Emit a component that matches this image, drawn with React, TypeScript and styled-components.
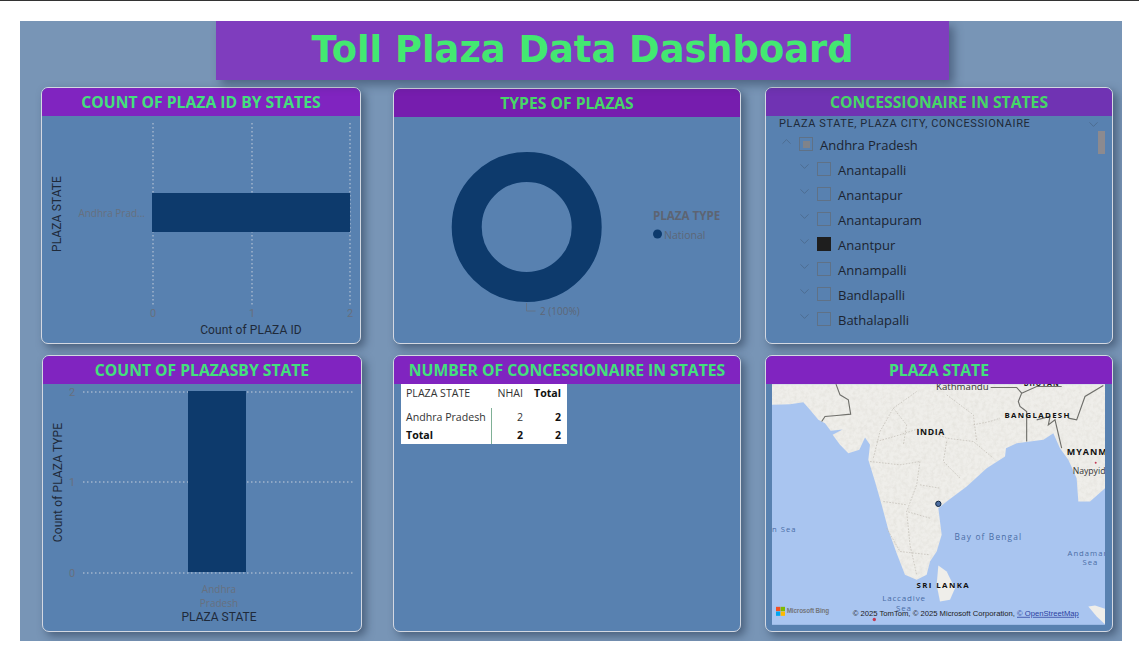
import { createGlobalStyle, styled } from 'styled-components';
import { ChevronDown, ChevronUp } from 'lucide-react';

const GlobalStyle = createGlobalStyle`
  html, body {
    margin: 0;
    padding: 0;
    background: #fff;
  }
  body {
    border-top: 1px solid #333;
    font-family: "Open Sans", "Noto Sans", sans-serif;
  }
`;

const Canvas = styled.main`
  width: 1102px;
  height: 620px;
  margin: 20px 0 0 20px;
  background: #7895b6;
  overflow: hidden;
`;

const TitleBar = styled.h1`
  position: relative;
  z-index: 2;
  width: 733px;
  height: 59px;
  margin: 0 0 7px 196px;
  background: #7f3dbe;
  color: #43e871;
  font: bold 36.8px/58px "DejaVu Sans", sans-serif;
  text-align: center;
  box-shadow: 5px 5px 9px rgba(30, 45, 70, 0.45);
`;

const Board = styled.div`
  display: grid;
  grid-template-columns: 321px 379px 372px;
  grid-template-rows: 257px 277px;
  row-gap: 11px;
  margin-left: 21px;
`;

const Card = styled.section<{ $left?: number; $right?: number; $top?: number }>`
  display: flex;
  flex-direction: column;
  box-sizing: border-box;
  min-width: 0;
  margin: ${(p) => p.$top ?? 0}px ${(p) => p.$right ?? 0}px 0 ${(p) => p.$left ?? 0}px;
  background: #5881b0;
  border: 1px solid #d3d8e2;
  border-radius: 7px;
  box-shadow: 4px 4px 9px rgba(30, 45, 70, 0.5);
  overflow: hidden;
`;

const CardHeader = styled.h2<{ $bg?: string; $fg?: string }>`
  flex: none;
  height: 28px;
  margin: 0;
  background: ${(p) => p.$bg ?? '#8024c0'};
  color: ${(p) => p.$fg ?? '#43e07c'};
  font: bold 15.7px/28px "Open Sans", sans-serif;
  text-align: center;
  white-space: nowrap;
`;

const ChartSvg = styled.svg`
  display: block;
  flex: 1;
  width: 100%;
  min-height: 0;
`;

const TableWrap = styled.div`
  padding: 0 7px;
`;

const MatrixTable = styled.table`
  width: 165px;
  border-collapse: collapse;
  background: #fff;
  color: #333;
  font-size: 10.6px;
  line-height: 15px;
  table-layout: fixed;
  tbody tr:first-child td { height: 19px; }
  tbody tr:last-child td { height: 17px; }
`;

const Th = styled.th<{ $strong?: boolean; $w: number; $right?: boolean }>`
  width: ${(p) => p.$w}px;
  height: 24px;
  padding: 0 ${(p) => (p.$right ? 5 : 0)}px 6px 5px;
  box-sizing: border-box;
  font-weight: ${(p) => (p.$strong ? 700 : 400)};
  color: ${(p) => (p.$strong ? '#111' : '#333')};
  text-align: ${(p) => (p.$right ? 'right' : 'left')};
`;

const Td = styled.td<{ $strong?: boolean; $divider?: boolean; $right?: boolean }>`
  padding: 0 5px;
  font-weight: ${(p) => (p.$strong ? 700 : 400)};
  color: ${(p) => (p.$strong ? '#111' : '#333')};
  text-align: ${(p) => (p.$right ? 'right' : 'left')};
  border-right: ${(p) => (p.$divider ? '1px solid #7fb096' : 'none')};
  white-space: nowrap;
`;

const Slicer = styled.div`
  position: relative;
  flex: 1;
  padding: 0 7px 0 13px;
  color: #1c2431;
`;

const SlicerHead = styled.div`
  display: flex;
  align-items: center;
  justify-content: space-between;
  height: 16px;
  padding-right: 4px;
  font: 11px/16px "Roboto", sans-serif;
  letter-spacing: 0.6px;
  color: #202a38;
  svg { color: #46617f; }
`;

const TreeList = styled.ul`
  margin: 0;
  padding: 0;
  list-style: none;
`;

const TreeRow = styled.li<{ $level: number }>`
  display: flex;
  align-items: center;
  height: 25px;
  padding-left: ${(p) => p.$level * 18}px;
  font-size: 13px;
  svg { flex: none; margin-top: -6px; color: #46617f; }
`;

const Check = styled.span<{ $state?: 'on' | 'part' }>`
  display: flex;
  align-items: center;
  justify-content: center;
  flex: none;
  box-sizing: border-box;
  width: 14px;
  height: 14px;
  margin: -1px 7px 0 5px;
  background: ${(p) => (p.$state === 'on' ? '#1e1e1e' : 'transparent')};
  border: 1px solid ${(p) => (p.$state === 'on' ? '#1e1e1e' : '#5f7186')};
  &::after {
    content: '';
    display: ${(p) => (p.$state === 'part' ? 'block' : 'none')};
    width: 7px;
    height: 7px;
    background: #80838a;
  }
`;

const ScrollThumb = styled.span`
  position: absolute;
  top: 15px;
  right: 7px;
  width: 7px;
  height: 23px;
  background: #8c8a8f;
`;

const MapFrame = styled.div`
  flex: 1;
  padding: 0 6px 6px;
  min-height: 0;
`;

const MapSvg = styled.svg`
  display: block;
  width: 333px;
  height: 241px;
`;

const cities = ['Anantapalli', 'Anantapur', 'Anantapuram', 'Anantpur', 'Annampalli', 'Bandlapalli', 'Bathalapalli'];

const mainland =
  'M36 180L90 178L130 172L150 195L175 225L195 235L212 258L248 254L218 270L240 300L265 325L298 315L315 278L330 300L325 345L345 410L365 480L385 555L410 625L435 690L470 705L500 690L510 650L530 620L545 570L535 490L560 470L620 425L680 370L735 335L738 310L770 295L850 285L880 265L900 310L925 345L950 400L955 470L990 470L1035 430V118H36Z';

function GridLine(props: { x1: number; y1: number; x2: number; y2: number }) {
  return <line {...props} stroke="#c6cfdb" strokeWidth={1} strokeDasharray="1.5 2.5" />;
}

function BarByState() {
  return (
    <ChartSvg viewBox="42 116 318 227">
      <GridLine x1={153} y1={123} x2={153} y2={305} />
      <GridLine x1={252} y1={123} x2={252} y2={305} />
      <GridLine x1={350} y1={123} x2={350} y2={305} />
      <rect x={152} y={193} width={198} height={39} fill="#0d3a6c" />
      <text x={145} y={217} textAnchor="end" fontFamily="Open Sans, sans-serif" fontSize={10} fill="#66707f">Andhra Prad...</text>
      <g fontFamily="Roboto, sans-serif" fontSize={11} fill="#66707f" textAnchor="middle">
        <text x={153} y={317}>0</text>
        <text x={252} y={317}>1</text>
        <text x={350} y={317}>2</text>
      </g>
      <g fontFamily="Roboto, sans-serif" fontSize={12} fill="#1f2a3a" letterSpacing={0.1} textAnchor="middle">
        <text x={251} y={334}>Count of PLAZA ID</text>
        <text transform="translate(61 214) rotate(-90)">PLAZA STATE</text>
      </g>
    </ChartSvg>
  );
}

function PlazaDonut() {
  return (
    <ChartSvg viewBox="394 117 346 226">
      <circle cx={526.7} cy={227} r={60} fill="none" stroke="#0d3a6c" strokeWidth={30} />
      <path d="M526.5 303v8h9" fill="none" stroke="#66707f" strokeWidth={0.8} />
      <text x={540} y={315} fontSize={10} fill="#5d6777">2 (100%)</text>
      <text x={653} y={220} fontSize={11.6} fontWeight={700} fill="#5d6472">PLAZA TYPE</text>
      <circle cx={657.5} cy={234} r={4.5} fill="#0d3a6c" />
      <text x={664} y={239} fontSize={10.5} fill="#5d6777">National</text>
    </ChartSvg>
  );
}

function ColumnByState() {
  return (
    <ChartSvg viewBox="43 384 318 247">
      <GridLine x1={83} y1={392} x2={355} y2={392} />
      <GridLine x1={83} y1={482} x2={355} y2={482} />
      <GridLine x1={83} y1={573} x2={355} y2={573} />
      <rect x={188} y={391} width={58} height={181} fill="#0d3a6c" />
      <g fontFamily="Roboto, sans-serif" fontSize={11} fill="#66707f" textAnchor="middle">
        <text x={72} y={396}>2</text>
        <text x={72} y={486}>1</text>
        <text x={72} y={577}>0</text>
      </g>
      <g fontFamily="Open Sans, sans-serif" fontSize={10} fill="#66707f" textAnchor="middle">
        <text x={219} y={593}>Andhra</text>
        <text x={219} y={607}>Pradesh</text>
      </g>
      <g fontFamily="Roboto, sans-serif" fill="#1f2a3a" textAnchor="middle">
        <text x={219} y={621} fontSize={12}>PLAZA STATE</text>
        <text transform="translate(62 482.5) rotate(-90)" fontSize={12} letterSpacing={0.1}>Count of PLAZA TYPE</text>
      </g>
    </ChartSvg>
  );
}

function IndiaMap() {
  return (
    <MapSvg viewBox="36 118 999 722" role="img">
      <defs>
        <filter id="soft" x="-2%" y="-2%" width="104%" height="104%">
          <feGaussianBlur stdDeviation="1.2" />
        </filter>
        <filter id="grain" x="0" y="0" width="100%" height="100%">
          <feTurbulence type="fractalNoise" baseFrequency="0.09" numOctaves="3" seed="4" />
          <feColorMatrix values="0 0 0 0 0.6  0 0 0 0 0.58  0 0 0 0 0.52  0.5 0 0 0 -0.18" />
          <feComposite in2="SourceGraphic" operator="in" />
        </filter>
      </defs>
      <rect x={36} y={118} width={999} height={722} fill="#a9c5f0" />
      <g filter="url(#soft)">
        <path fill="#efeeea" d={mainland} />
        <path fill="#efeeea" d="M535 662L560 680L585 730L570 765L540 770L530 720Z" />
        <path fill="#efeeea" d="M985 785L1010 815L1035 838V792L1005 782Z" />
      </g>
      <path filter="url(#grain)" fill="#000" d={mainland} />
      <g filter="url(#soft)">
        <path
          fill="none"
          stroke="#6f6f6b"
          strokeWidth={3.4}
          d="M228 118L240 150L265 165L272 208L230 212L195 215L185 230M692 128L770 128L785 145L775 170L780 185L800 200L800 290M785 145L830 125L905 125M830 225L870 215L865 240L885 225L905 310M925 220L950 225L975 155L1030 122"
        />
        <path
          fill="none"
          stroke="#c2bfb6"
          strokeWidth={2.2}
          strokeDasharray="5 4"
          d="M350 290L420 270L480 250L560 280L640 290L700 340M470 140L400 190L360 260L340 340M480 350L470 420L440 500L450 600L470 690M560 290L550 350L600 400M330 350L420 360L480 350M370 470L440 480M640 240L690 230L720 220M380 550L420 620L510 630M400 190L440 240L430 300M560 150L640 210L650 290M480 420L540 430M510 520L440 500"
        />
      </g>
      <g fontFamily="Open Sans, sans-serif" textAnchor="middle">
        <text x={607} y={137} fontSize={29} fill="#333">Kathmandu</text>
        <text x={845} y={124} fontSize={21} fontWeight={700} letterSpacing={3} fill="#222">BHUTAN</text>
        <text x={833} y={219} fontSize={23.5} fontWeight={700} letterSpacing={4} fill="#111">BANGLADESH</text>
        <text x={512} y={271} fontSize={26} fontWeight={700} letterSpacing={2} fill="#111">INDIA</text>
        <text x={550} y={731} fontSize={23.5} fontWeight={700} letterSpacing={4.2} fill="#111">SRI LANKA</text>
        <text x={685} y={587} fontSize={25} letterSpacing={3.5} fill="#4a6da6">Bay of Bengal</text>
        <text x={432} y={770} fontSize={24} letterSpacing={2.5} fill="#4a6da6">Laccadive</text>
        <text x={432} y={798} fontSize={24} letterSpacing={2.5} fill="#4a6da6">Sea</text>
        <text x={73} y={561} fontSize={23} letterSpacing={3} fill="#4a6da6">n Sea</text>
        <text x={985} y={634} fontSize={23} letterSpacing={3} fill="#4a6da6">Andaman</text>
        <text x={991} y={662} fontSize={23} letterSpacing={3} fill="#4a6da6">Sea</text>
      </g>
      <g fontFamily="Open Sans, sans-serif">
        <text x={920} y={331} fontSize={27} fontWeight={700} letterSpacing={3} fill="#111">MYANMAR</text>
        <text x={938} y={388} fontSize={26} fill="#333">Naypyidaw</text>
      </g>
      <circle cx={1007} cy={354} r={3} fill="#c23a55" />
      <circle cx={343} cy={824} r={5} fill="#c23a55" />
      <circle cx={535} cy={477} r={8} fill="#4d6da0" stroke="#0d2440" strokeWidth={3} />
      <rect x={48} y={786} width={13} height={13} fill="#f25022" />
      <rect x={62} y={786} width={13} height={13} fill="#7fba00" />
      <rect x={48} y={800} width={13} height={13} fill="#00a4ef" />
      <rect x={62} y={800} width={13} height={13} fill="#ffb900" />
      <text x={80} y={806} fontFamily="Liberation Sans, sans-serif" fontSize={19} fontWeight={700} fill="#74777c" letterSpacing={-0.4}>Microsoft Bing</text>
      <text x={278} y={813} fontFamily="Liberation Sans, sans-serif" fontSize={23} fill="#222">
        © 2025 TomTom, © 2025 Microsoft Corporation, <tspan fill="#2a3fa0" textDecoration="underline">© OpenStreetMap</tspan>
      </text>
    </MapSvg>
  );
}

export default function App() {
  return (
    <>
      <GlobalStyle />
      <Canvas>
        <TitleBar>Toll Plaza Data Dashboard</TitleBar>
        <Board>
          <Card $right={1}>
            <CardHeader>COUNT OF PLAZA ID BY STATES</CardHeader>
            <BarByState />
          </Card>
          <Card $left={31} $top={1}>
            <CardHeader $bg="#761dae" $fg="#46d767">TYPES OF PLAZAS</CardHeader>
            <PlazaDonut />
          </Card>
          <Card $left={24}>
            <CardHeader $bg="#7033b3" $fg="#46d767">CONCESSIONAIRE IN STATES</CardHeader>
            <Slicer>
              <SlicerHead>
                PLAZA STATE, PLAZA CITY, CONCESSIONAIRE
                <ChevronDown size={15} strokeWidth={1} />
              </SlicerHead>
              <ScrollThumb />
              <TreeList>
                <TreeRow $level={0}>
                  <ChevronUp size={15} strokeWidth={1} />
                  <Check $state="part" />
                  Andhra Pradesh
                </TreeRow>
                {cities.map((city) => (
                  <TreeRow key={city} $level={1}>
                    <ChevronDown size={15} strokeWidth={1} />
                    <Check $state={city === 'Anantpur' ? 'on' : undefined} />
                    {city}
                  </TreeRow>
                ))}
              </TreeList>
            </Slicer>
          </Card>
          <Card $left={1}>
            <CardHeader>COUNT OF PLAZASBY STATE</CardHeader>
            <ColumnByState />
          </Card>
          <Card $left={31}>
            <CardHeader>NUMBER OF CONCESSIONAIRE IN STATES</CardHeader>
            <TableWrap>
              <MatrixTable>
                <thead>
                  <tr>
                    <Th $w={90}>PLAZA STATE</Th>
                    <Th $w={37} $right>NHAI</Th>
                    <Th $w={38} $strong $right>Total</Th>
                  </tr>
                </thead>
                <tbody>
                  <tr>
                    <Td $divider>Andhra Pradesh</Td>
                    <Td $right>2</Td>
                    <Td $right $strong>2</Td>
                  </tr>
                  <tr>
                    <Td $divider $strong>Total</Td>
                    <Td $right $strong>2</Td>
                    <Td $right $strong>2</Td>
                  </tr>
                </tbody>
              </MatrixTable>
            </TableWrap>
          </Card>
          <Card $left={24}>
            <CardHeader>PLAZA STATE</CardHeader>
            <MapFrame>
              <IndiaMap />
            </MapFrame>
          </Card>
        </Board>
      </Canvas>
    </>
  );
}
